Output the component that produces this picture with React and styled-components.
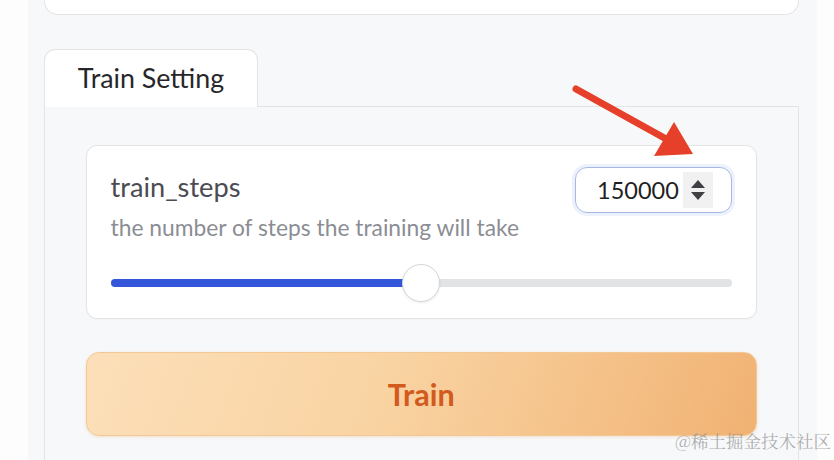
import React from "react";
import styled, { createGlobalStyle } from "styled-components";

const Global = createGlobalStyle`
  html, body { margin: 0; padding: 0; background: #fdfdfe; }
  * { box-sizing: border-box; }
`;

const Page = styled.div`
  position: relative;
  width: 834px;
  height: 460px;
  overflow: hidden;
  padding: 0 17px 0 28px;
  font-family: Lato, "Noto Sans", sans-serif;
`;

const Column = styled.div`
  height: 100%;
  background: #f7f8fa;
  padding: 0 18px 0 16px;
  display: flex;
  flex-direction: column;
`;

const TopCard = styled.div`
  height: 15px;
  background: #fff;
  border: 1.5px solid #e4e4e7;
  border-top: none;
  border-radius: 0 0 14px 14px;
  flex-shrink: 0;
`;

const TabRow = styled.div`
  display: flex;
  margin-top: 34px;
  flex-shrink: 0;
`;

const Tab = styled.div`
  width: 214px;
  height: 58px;
  background: #fff;
  border: 1.5px solid #e4e4e7;
  border-bottom: none;
  border-radius: 11px 11px 0 0;
  display: flex;
  align-items: center;
  justify-content: center;
  font-size: 26.8px;
  color: #27272a;
  padding-bottom: 2px;
`;

const TabRest = styled.div`
  flex: 1;
  border-bottom: 1.5px solid #e4e4e7;
`;

const TabPanel = styled.div`
  flex: none;
  height: 420px;
  border: 1.5px solid #e4e4e7;
  border-top: none;
  padding: 38px 41px 0 40.5px;
  display: flex;
  flex-direction: column;
  gap: 33px;
`;

const Card = styled.div`
  background: #fff;
  border: 1px solid #e4e4e7;
  border-radius: 11px;
  padding: 21px 24px 16px 24px;
  box-shadow: 0 1px 2px rgba(0, 0, 0, 0.03);
`;

const Header = styled.div`
  display: flex;
  justify-content: space-between;
  align-items: flex-start;
`;

const Texts = styled.div`
  display: flex;
  flex-direction: column;
  padding-top: 7px;
  gap: 14px;
`;

const Label = styled.div`
  font-size: 27.2px;
  line-height: 26px;
  color: #4b4b52;
`;

const Info = styled.div`
  font-size: 22.8px;
  line-height: 26px;
  color: #8b8d94;
`;

const NumberBox = styled.div`
  width: 157px;
  height: 46px;
  border: 1.5px solid #a3b8e6;
  border-radius: 12px;
  box-shadow: 0 0 0 3px rgba(160, 185, 240, 0.2);
  display: flex;
  align-items: center;
  padding: 0 18px 0 21px;
  justify-content: space-between;
`;

const NumberText = styled.span`
  font-size: 23.5px;
  color: #1f1f23;
`;

const Spinner = styled.div`
  width: 30px;
  height: 36px;
  background: #f1f1f2;
  display: flex;
  flex-direction: column;
  align-items: center;
  justify-content: center;
  gap: 4px;
`;

const Tri = styled.div`
  width: 0;
  height: 0;
  border-left: 7.5px solid transparent;
  border-right: 7.5px solid transparent;
  ${(p) =>
    p.$up
      ? "border-bottom: 8px solid #3f3f44;"
      : "border-top: 8px solid #3f3f44;"}
`;

const SliderWrap = styled.div`
  margin-top: 24px;
  height: 38px;
  display: flex;
  align-items: center;
`;

const Track = styled.div`
  position: relative;
  flex: 1;
  height: 8px;
  border-radius: 4px;
  background: #e2e3e5;
`;

const Fill = styled.div`
  height: 100%;
  border-radius: 4px 0 0 4px;
  background: #3356db;
`;

const Thumb = styled.div`
  position: absolute;
  top: 50%;
  width: 38px;
  height: 38px;
  margin: -19px 0 0 -19px;
  border-radius: 50%;
  background: #fff;
  border: 1px solid #d4d6da;
  box-shadow: 0 1px 3px rgba(0, 0, 0, 0.08);
`;

const TrainButton = styled.button`
  height: 84px;
  width: 100%;
  flex-shrink: 0;
  border: 1px solid #f3c894;
  border-radius: 13px;
  background: linear-gradient(110deg, #fcdfb9 0%, #f9d3a2 45%, #f1b273 100%);
  box-shadow: 0 1px 3px rgba(220, 150, 80, 0.25);
  font-family: Lato, "Noto Sans", sans-serif;
  font-weight: 700;
  font-size: 30.5px;
  color: #d25a1c;
  cursor: pointer;
`;

const Watermark = styled.div`
  position: absolute;
  right: 3px;
  bottom: 7px;
  font-family: "Noto Serif CJK SC", "Noto Sans CJK SC", serif;
  font-size: 17.5px;
  color: rgba(140, 140, 140, 0.7);
`;

const Arrow = styled.svg`
  position: absolute;
  left: 0;
  top: 0;
  pointer-events: none;
`;

export default function App() {
  const value = 150000;
  const max = 300000;
  const pct = (value / max) * 100;
  return (
    <>
      <Global />
      <Page>
        <Column>
          <TopCard />
          <TabRow>
            <Tab>Train Setting</Tab>
            <TabRest />
          </TabRow>
          <TabPanel>
            <Card>
              <Header>
                <Texts>
                  <Label>train_steps</Label>
                  <Info>the number of steps the training will take</Info>
                </Texts>
                <NumberBox>
                  <NumberText>{value}</NumberText>
                  <Spinner>
                    <Tri $up />
                    <Tri />
                  </Spinner>
                </NumberBox>
              </Header>
              <SliderWrap>
                <Track>
                  <Fill style={{ width: `${pct}%` }} />
                  <Thumb style={{ left: `${pct}%` }} />
                </Track>
              </SliderWrap>
            </Card>
            <TrainButton>Train</TrainButton>
          </TabPanel>
        </Column>
        <Arrow width="834" height="460" viewBox="0 0 834 460">
          <line x1="576" y1="89" x2="668" y2="140" stroke="#e6402a" strokeWidth="7" strokeLinecap="round" />
          <polygon points="693,154 674,122 654,156" fill="#e6402a" />
        </Arrow>
        <Watermark>@稀土掘金技术社区</Watermark>
      </Page>
    </>
  );
}
